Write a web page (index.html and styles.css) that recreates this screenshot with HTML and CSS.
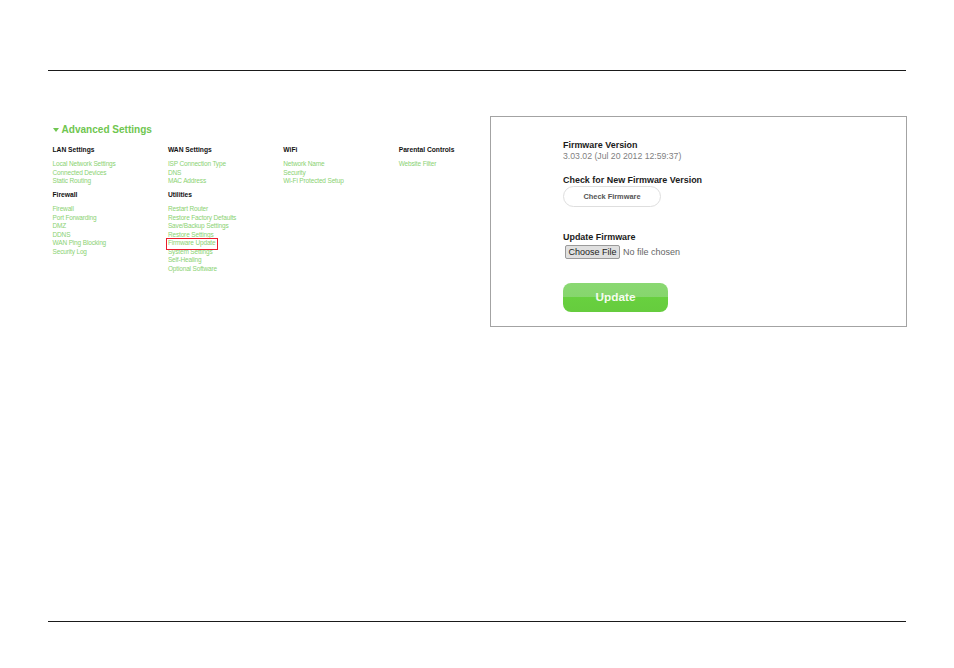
FILE: index.html
```html
<!DOCTYPE html>
<html lang="en">
<head>
<meta charset="utf-8">
<title>Firmware Update</title>
<link rel="stylesheet" href="styles.css">
</head>
<body>
<div class="page">
  <hr class="rule">
  <main class="content">
    <section class="settings">
      <h1 class="title"><span class="arrow"></span>Advanced Settings</h1>
      <div class="columns">
        <div class="group">
          <h2>LAN Settings</h2>
          <ul><li>Local Network Settings</li><li>Connected Devices</li><li>Static Routing</li></ul>
        </div>
        <div class="group">
          <h2>WAN Settings</h2>
          <ul><li>ISP Connection Type</li><li>DNS</li><li>MAC Address</li></ul>
        </div>
        <div class="group">
          <h2>WiFi</h2>
          <ul><li>Network Name</li><li>Security</li><li>Wi-Fi Protected Setup</li></ul>
        </div>
        <div class="group">
          <h2>Parental Controls</h2>
          <ul><li>Website Filter</li></ul>
        </div>
        <div class="group">
          <h2>Firewall</h2>
          <ul><li>Firewall</li><li>Port Forwarding</li><li>DMZ</li><li>DDNS</li><li>WAN Ping Blocking</li><li>Security Log</li></ul>
        </div>
        <div class="group">
          <h2>Utilities</h2>
          <ul><li>Restart Router</li><li>Restore Factory Defaults</li><li>Save/Backup Settings</li><li>Restore Settings</li><li class="marked">Firmware Update</li><li>System Settings</li><li>Self-Healing</li><li>Optional Software</li></ul>
        </div>
      </div>
    </section>
    <section class="panel">
      <h3>Firmware Version</h3>
      <p class="version">3.03.02 (Jul 20 2012 12:59:37)</p>
      <h3 class="check-title">Check for New Firmware Version</h3>
      <button class="check" type="button">Check Firmware</button>
      <h3 class="update-title">Update Firmware</h3>
      <div class="file"><span class="choose">Choose File</span><span class="none">No file chosen</span></div>
      <button class="update" type="button">Update</button>
    </section>
  </main>
  <div class="spacer"></div>
  <hr class="rule">
</div>
</body>
</html>
```

FILE: styles.css
```css
* { box-sizing: border-box; }
html, body { margin: 0; padding: 0; background: #fff; }
body { font-family: "Liberation Sans", Arial, sans-serif; color: #111; }
.page {
  width: 954px;
  height: 668px;
  padding: 70px 48px 46px 48px;
  display: flex;
  flex-direction: column;
}
.rule { margin: 0; border: 0; height: 1px; background: #1a1a1a; flex: none; }
.spacer { flex: 1; }
.content {
  display: flex;
  align-items: flex-start;
  margin-top: 45px;
}
.settings { width: 442px; flex: none; padding: 7px 0 0 4.5px; }
.title {
  margin: 0;
  display: flex;
  align-items: center;
  font-size: 10.05px;
  line-height: 13px;
  font-weight: 700;
  color: #6fc650;
}
.arrow {
  width: 0;
  height: 0;
  margin-right: 3px;
  border-left: 3px solid transparent;
  border-right: 3px solid transparent;
  border-top: 4px solid #6fc650;
}
.columns {
  display: grid;
  grid-template-columns: repeat(4, 115.4px);
  margin-top: 10px;
}
.group h2 {
  margin: 0;
  font-size: 6.7px;
  line-height: 8.6px;
  font-weight: 700;
  color: #111;
}
.group ul {
  list-style: none;
  margin: 5.6px 0 5.4px;
  padding: 0;
  font-size: 6.5px;
  letter-spacing: -0.15px;
  line-height: 8.55px;
  color: #8ad272;
}
.group:nth-child(n+5) ul { margin-top: 5.4px; }
.marked { position: relative; }
.marked::after {
  content: "";
  position: absolute;
  left: -2px;
  top: -1px;
  width: 50px;
  height: 10px;
  border: 1px solid #ea1c2c;
}
.panel {
  width: 417px;
  height: 211px;
  flex: none;
  border: 1px solid #a3a3a3;
  padding: 23px 0 0 72px;
  display: flex;
  flex-direction: column;
  align-items: flex-start;
}
.panel h3 {
  margin: 0;
  font-size: 8.95px;
  line-height: 10px;
  font-weight: 700;
  color: #1a1a1a;
}
.version {
  margin: 1px 0 0;
  font-size: 8.7px;
  line-height: 11px;
  color: #7f7f7f;
}
.panel .check-title { margin-top: 13px; }
.check {
  width: 98px;
  height: 21px;
  margin-top: 1px;
  padding: 0;
  background: #fff;
  border: 1px solid #dedede;
  border-radius: 11px;
  font-family: inherit;
  font-size: 7.4px;
  font-weight: 700;
  color: #555;
}
.panel .update-title { margin-top: 25px; }
.file {
  display: flex;
  align-items: center;
  margin-top: 3px;
  margin-left: 2px;
  font-size: 9px;
}
.choose {
  width: 55px;
  height: 14px;
  display: flex;
  align-items: center;
  justify-content: center;
  background: #e0e0e0;
  border: 1px solid #9a9a9a;
  border-radius: 2px;
  color: #222;
}
.none { margin-left: 3px; color: #666; }
.update {
  width: 105px;
  height: 29px;
  margin-top: 24px;
  padding: 0 0 2px;
  border: 0;
  border-radius: 8px;
  background: linear-gradient(#8ad872 0, #86d66d 50%, #68d03f 50%, #66cc3e 100%);
  font-family: inherit;
  font-size: 11.8px;
  font-weight: 700;
  color: #f4fbef;
}
```
